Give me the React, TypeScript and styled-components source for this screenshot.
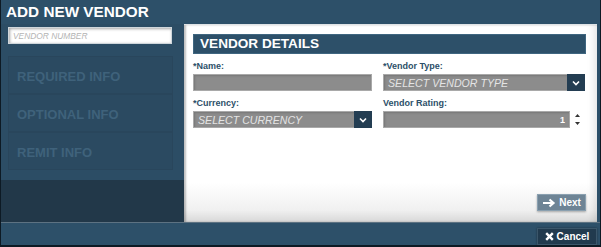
import React from "react";
import styled, { createGlobalStyle } from "styled-components";

const Global = createGlobalStyle`
  html, body { margin: 0; padding: 0; background: #fff; }
  * { box-sizing: border-box; }
  body { font-family: "Liberation Sans", Arial, sans-serif; }
`;

const Frame = styled.div`
  width: 601px;
  height: 247px;
  background: #2d5069;
  border-left: 1px solid #0d1a24;
  border-right: 1px solid #0d1a24;
  border-bottom: 2px solid #0d1a24;
  display: flex;
  flex-direction: column;
  overflow: hidden;
`;

const TitleBar = styled.div`
  height: 24px;
  padding: 3px 0 0 5px;
  color: #fff;
  font-weight: bold;
  font-size: 15.3px;
  line-height: 18px;
`;

const Body = styled.div`
  height: 198px;
  display: flex;
`;

const Sidebar = styled.div`
  width: 183px;
  display: flex;
  flex-direction: column;
  background: #2c4d65;
`;

const SideTop = styled.div`
  height: 156px;
  padding: 3px 11px 0 7px;
  display: flex;
  flex-direction: column;
`;

const SideBottom = styled.div`
  flex: 1;
  background: #223849;
`;

const VendorInput = styled.input`
  width: 164px;
  height: 17px;
  border: 1px solid #cfd6db;
  background: #fff;
  box-shadow: inset 1px 1px 3px rgba(0, 0, 0, 0.35);
  font-family: "Liberation Sans", Arial, sans-serif;
  font-style: italic;
  font-size: 8.4px;
  padding: 0 4px;
  color: #444;
  outline: none;
  &::placeholder { color: #b4b4b4; }
`;

const Menu = styled.div`
  margin-top: 12px;
  display: flex;
  flex-direction: column;
`;

const MenuItem = styled.div`
  height: 38px;
  padding: 3px 0 0 8px;
  display: flex;
  align-items: center;
  background: #2b4a61;
  border: 1px solid #29465c;
  color: #3f627b;
  font-weight: bold;
  font-size: 13px;
`;

const Panel = styled.div`
  width: 413px;
  background: linear-gradient(to bottom, #ffffff 0%, #ffffff 80%, #f0f0f0 94%, #d8d8d8 100%);
  box-shadow: inset 2px 0 2px rgba(0, 0, 0, 0.25), inset -8px 0 8px -6px rgba(0, 0, 0, 0.12);
  border-top: 1px solid #dfe3e6;
  padding: 9px 11px 0 9px;
  display: flex;
  flex-direction: column;
`;

const SectionHeader = styled.div`
  height: 20px;
  background: #2d5069;
  border: 1px solid #3f6680;
  color: #fff;
  font-weight: bold;
  font-size: 13.6px;
  line-height: 18px;
  padding-left: 6px;
`;

const FormGrid = styled.div`
  display: grid;
  grid-template-columns: 179px 202px;
  column-gap: 11px;
  row-gap: 7px;
  margin-top: 7px;
`;

const Field = styled.div`
  display: flex;
  flex-direction: column;
`;

const Label = styled.div`
  font-size: 9px;
  font-weight: bold;
  color: #2d5069;
  height: 13px;
  line-height: 10px;
`;

const GrayBox = styled.div<{ $w?: number }>`
  height: 17px;
  width: ${(p) => (p.$w ? `${p.$w}px` : "100%")};
  background: #8c8c8c;
  border: 1px solid #a9a9a9;
  box-shadow: inset 1px 1px 2px rgba(0, 0, 0, 0.15);
  display: flex;
  align-items: center;
`;

const SelectText = styled.div`
  flex: 1;
  padding-left: 4px;
  color: #e4e4e4;
  font-style: italic;
  font-size: 10.6px;
  white-space: nowrap;
`;

const ArrowBox = styled.div`
  width: 18px;
  height: 17px;
  margin: -1px -1px -1px 0;
  background: #233d52;
  display: flex;
  align-items: center;
  justify-content: center;
`;

const NumberRow = styled.div`
  display: flex;
  align-items: center;
`;

const NumberValue = styled.div`
  flex: 1;
  text-align: right;
  padding-right: 4px;
  color: #fff;
  font-weight: bold;
  font-size: 9px;
`;

const Spinner = styled.div`
  width: 15px;
  display: flex;
  flex-direction: column;
  align-items: center;
  gap: 5px;
`;

const ButtonRow = styled.div`
  flex: 1;
  display: flex;
  justify-content: flex-end;
  align-items: flex-end;
  padding-bottom: 11px;
`;

const NextButton = styled.div`
  width: 49px;
  height: 17px;
  background: #6e8495;
  border: 1px solid #8aa0b0;
  box-shadow: 0 1px 2px rgba(0, 0, 0, 0.3);
  color: #fff;
  font-weight: bold;
  font-size: 10px;
  display: flex;
  align-items: center;
  justify-content: center;
  gap: 3px;
`;

const Footer = styled.div`
  flex: 1;
  border-top: 1px solid #5d7282;
  display: flex;
  justify-content: flex-end;
  align-items: flex-start;
  padding: 5px 3px 0 0;
`;

const CancelButton = styled.div`
  width: 60px;
  height: 17px;
  background: #213a4e;
  border: 1px solid #3b566a;
  box-shadow: 0 0 2px rgba(0, 0, 0, 0.4);
  color: #fff;
  font-weight: bold;
  font-size: 10px;
  display: flex;
  align-items: center;
  justify-content: center;
  gap: 3px;
`;

const Chevron = () => (
  <svg width="8" height="6" viewBox="0 0 8 6">
    <path d="M1 1.5 L4 4.5 L7 1.5" stroke="#fff" strokeWidth="1.6" fill="none" />
  </svg>
);

const App: React.FC = () => (
  <>
    <Global />
    <Frame>
      <TitleBar>ADD NEW VENDOR</TitleBar>
      <Body>
        <Sidebar>
          <SideTop>
            <VendorInput placeholder="VENDOR NUMBER" />
            <Menu>
              <MenuItem>REQUIRED INFO</MenuItem>
              <MenuItem>OPTIONAL INFO</MenuItem>
              <MenuItem>REMIT INFO</MenuItem>
            </Menu>
          </SideTop>
          <SideBottom />
        </Sidebar>
        <Panel>
          <SectionHeader>VENDOR DETAILS</SectionHeader>
          <FormGrid>
            <Field>
              <Label>*Name:</Label>
              <GrayBox />
            </Field>
            <Field>
              <Label>*Vendor Type:</Label>
              <GrayBox>
                <SelectText>SELECT VENDOR TYPE</SelectText>
                <ArrowBox>
                  <Chevron />
                </ArrowBox>
              </GrayBox>
            </Field>
            <Field>
              <Label>*Currency:</Label>
              <GrayBox>
                <SelectText>SELECT CURRENCY</SelectText>
                <ArrowBox>
                  <Chevron />
                </ArrowBox>
              </GrayBox>
            </Field>
            <Field>
              <Label>Vendor Rating:</Label>
              <NumberRow>
                <GrayBox $w={187}>
                  <NumberValue>1</NumberValue>
                </GrayBox>
                <Spinner>
                  <svg width="5" height="3" viewBox="0 0 5 3">
                    <path d="M0 3 L2.5 0 L5 3 Z" fill="#333" />
                  </svg>
                  <svg width="5" height="3" viewBox="0 0 5 3">
                    <path d="M0 0 L2.5 3 L5 0 Z" fill="#333" />
                  </svg>
                </Spinner>
              </NumberRow>
            </Field>
          </FormGrid>
          <ButtonRow>
            <NextButton>
              <svg width="14" height="10" viewBox="0 0 14 10">
                <path d="M1 5 H11 M7.5 1.5 L11.5 5 L7.5 8.5" stroke="#fff" strokeWidth="2.2" fill="none" />
              </svg>
              Next
            </NextButton>
          </ButtonRow>
        </Panel>
      </Body>
      <Footer>
        <CancelButton>
          <svg width="9" height="9" viewBox="0 0 9 9">
            <path d="M1.2 1.2 L7.8 7.8 M7.8 1.2 L1.2 7.8" stroke="#fff" strokeWidth="2.4" />
          </svg>
          Cancel
        </CancelButton>
      </Footer>
    </Frame>
  </>
);

export default App;
